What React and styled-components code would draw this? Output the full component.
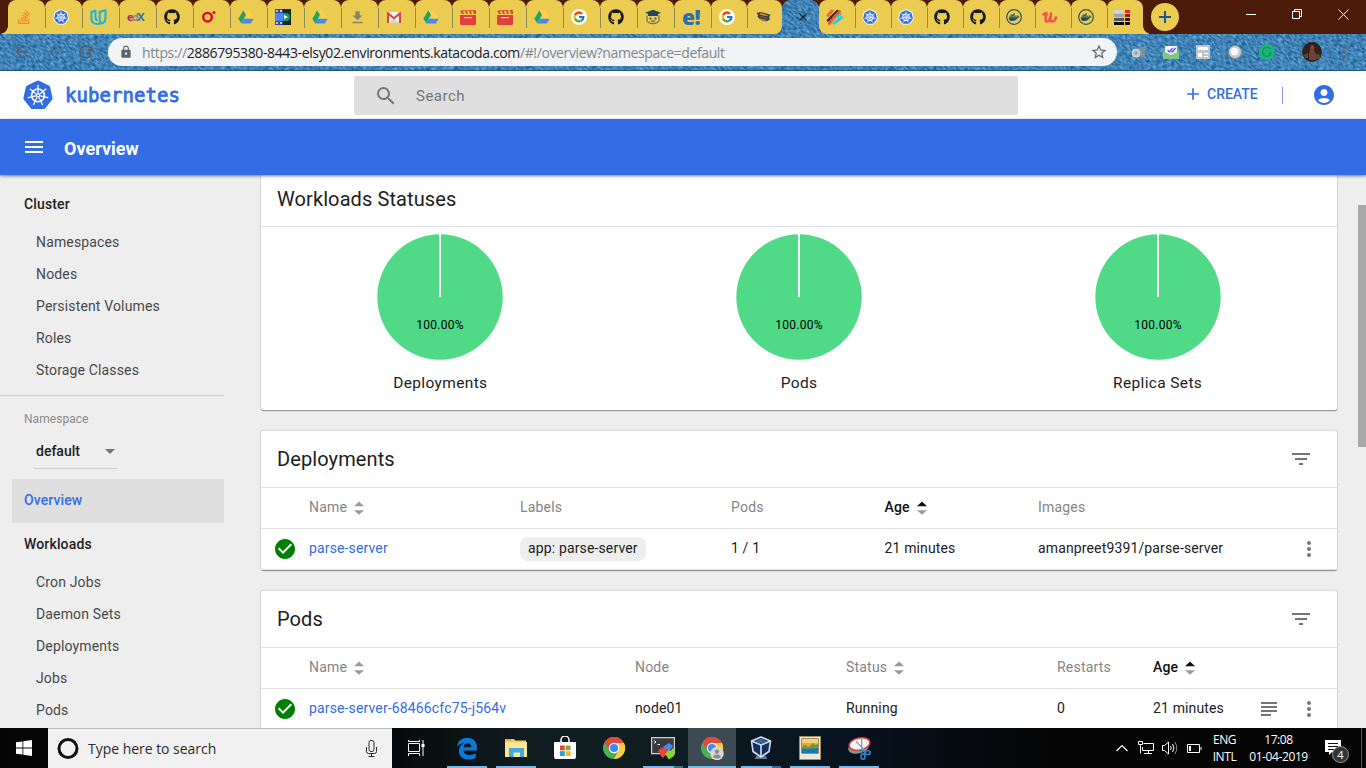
import React from 'react';
import styled, { createGlobalStyle, css } from 'styled-components';
import {
  MdSearch, MdAdd, MdAccountCircle, MdMenu, MdFilterList, MdMoreVert, MdSubject,
  MdCheckCircle, MdArrowDropDown, MdStarBorder, MdLock, MdArrowBack, MdArrowForward,
  MdRefresh, MdClose, MdFileDownload,
} from 'react-icons/md';
import { FaStackOverflow, FaGithub, FaDocker } from 'react-icons/fa';
import { FcGoogle } from 'react-icons/fc';

const BROWN = '#4d1b0a';
const YELLOW = '#eccb51';
const BLUE = '#326de6';

const GlobalStyle = createGlobalStyle`
  * { box-sizing: border-box; }
  html, body { margin: 0; padding: 0; overflow: hidden; }
  body { font-family: Roboto, "Liberation Sans", sans-serif; font-size: 14px; color: #212121; }
  svg { display: block; flex: none; }
`;

const Screen = styled.div`
  width: 1366px;
  height: 768px;
  display: flex;
  flex-direction: column;
  overflow: hidden;
  background: #eee;
`;

/* ---------- browser chrome ---------- */

const Chrome = styled.div`
  position: relative;
  height: 71px;
  flex: none;
  background: #3a80b4;
  border-bottom: 1px solid #23557f;
`;

const DenimLayer = styled.svg`
  position: absolute;
  left: 0;
  top: 0;
`;

const TabStrip = styled.div`
  position: relative;
  display: flex;
  height: 34px;
`;

const Flare = styled.div`
  width: ${(p) => (p.$right ? 6 : 8)}px;
  background: ${(p) =>
    p.$right
      ? `radial-gradient(circle at 8px 0, ${BROWN} 7.5px, ${YELLOW} 8px) 0 100% / 8px 8px no-repeat, ${BROWN}`
      : `radial-gradient(circle at 0 0, ${BROWN} 7.5px, ${YELLOW} 8px) 0 100% / 8px 8px no-repeat, ${BROWN}`};
`;

const TabSlot = styled.div`
  width: ${(p) => p.$w}px;
  background: linear-gradient(${BROWN} 50%, ${(p) => (p.$edge ? 'transparent' : YELLOW)} 50%);
`;

const TabFace = styled.div`
  height: 34px;
  padding: 9px 0 0 ${(p) => p.$pad}px;
  position: relative;
  background: ${YELLOW};
  border-radius: 8px 8px ${(p) => (p.$edge === 'right' ? 8 : 0)}px ${(p) => (p.$edge === 'left' ? 8 : 0)}px;
  ${(p) => p.$line && css`
    &::after {
      content: '';
      position: absolute;
      right: -1px;
      top: 8px;
      width: 1px;
      height: 20px;
      background: #8b8d55;
      z-index: 1;
    }
  `}
`;

const ActiveTab = styled.div`
  width: 37px;
  display: flex;
  justify-content: center;
  padding: 10px 0 0 4px;
  color: #12171b;
  background:
    radial-gradient(circle at 8px 8px, transparent 7.5px, ${BROWN} 8px) 0 0 / 8px 8px no-repeat,
    radial-gradient(circle at 0 8px, transparent 7.5px, ${BROWN} 8px) 100% 0 / 8px 8px no-repeat;
`;

const FrameRest = styled.div`
  flex: 1;
  display: flex;
  background: ${BROWN};
  padding-left: 2px;
`;

const NewTab = styled.div`
  width: 28px;
  height: 28px;
  margin-top: 3px;
  border-radius: 50%;
  background: ${YELLOW};
  color: #17598c;
  display: grid;
  place-items: center;
`;

const WindowControls = styled.div`
  margin-left: auto;
  display: flex;
  height: 28px;
`;

const WindowButton = styled.div`
  width: 46px;
  display: grid;
  place-items: center;
`;

const Toolbar = styled.div`
  position: relative;
  height: 36px;
  display: flex;
  align-items: center;
  color: #56616a;
`;

const NavButtons = styled.div`
  width: 108px;
  display: flex;
  gap: 12px;
  padding-left: 12px;
`;

const Omnibox = styled.div`
  width: 1009px;
  height: 28px;
  border-radius: 14px;
  background: #f1f3f4;
  display: flex;
  align-items: center;
  padding: 0 9px 0 11px;
  color: #5f6368;
`;

const Url = styled.div`
  margin-left: 9px;
  flex: 1;
  font: 14px "Open Sans", "Noto Sans", sans-serif;
  letter-spacing: -0.38px;
  color: #80868b;
  white-space: nowrap;
  b { font-weight: 400; color: #202124; }
`;

const Extensions = styled.div`
  display: flex;
  gap: 16px;
  padding-left: 14px;
`;

const Avatar = styled.div`
  width: 20px;
  height: 20px;
  margin: 0 0 0 27px;
`;

const Kebab = styled.div`
  margin-left: 12px;
  color: #5c656c;
`;

/* ---------- dashboard ---------- */

const TopBar = styled.header`
  height: 48px;
  flex: none;
  display: flex;
  align-items: center;
  background: #fff;
  padding-left: 23px;
`;

const Brand = styled.div`
  width: 331px;
  display: flex;
  align-items: center;
  gap: 12px;
  color: ${BLUE};
  font: 19px "DejaVu Sans Mono", monospace;
  letter-spacing: 0.05px;
  -webkit-text-stroke: 0.8px ${BLUE};
`;

const SearchBox = styled.div`
  width: 664px;
  height: 39px;
  border-radius: 2px;
  background: #dfdfdf;
  display: flex;
  align-items: center;
  gap: 18px;
  padding-left: 20px;
  margin-top: 1px;
  font-size: 15px;
  letter-spacing: 0.5px;
  color: #757575;
`;

const Create = styled.div`
  margin-left: 165px;
  padding-bottom: 2px;
  display: flex;
  align-items: center;
  gap: 4px;
  color: ${BLUE};
  font-weight: 500;
  font-size: 14px;
  letter-spacing: 0;
`;

const VLine = styled.div`
  width: 1px;
  height: 17px;
  margin: 0 29px 0 24px;
  background: #a98be6;
`;

const TitleBar = styled.div`
  position: relative;
  z-index: 2;
  height: 56px;
  flex: none;
  display: flex;
  align-items: center;
  gap: 18px;
  padding: 0 0 0 22px;
  background: ${BLUE};
  color: #fff;
  font-size: 18px;
  font-weight: 700;
  letter-spacing: 0;
  box-shadow: 0 1px 3px rgba(0, 0, 0, 0.5);
  span { padding-top: 3px; }
`;

const Body = styled.div`
  height: 553px;
  flex: none;
  display: flex;
  overflow: hidden;
  background: #eee;
`;

const Sidebar = styled.nav`
  width: 224px;
  flex: none;
  padding-top: 7px;
  letter-spacing: 0.15px;
`;

const NavHeading = styled.div`
  height: 44px;
  line-height: 44px;
  padding-left: 24px;
  font-weight: 500;
  letter-spacing: 0.15px;
`;

const NavItem = styled.div`
  height: 32px;
  line-height: 33px;
  padding-left: 36px;
  color: #484848;
`;

const NavRule = styled.div`
  height: 1px;
  margin-top: 9px;
  background: #d0d0d0;
`;

const NamespaceLabel = styled.div`
  margin: 15px 0 0 24px;
  font-size: 12px;
  line-height: 16px;
  letter-spacing: 0.05px;
  color: #8a8a8a;
`;

const NamespaceSelect = styled.div`
  width: 83px;
  height: 35px;
  margin: 7px 0 10px 34px;
  padding: 0 0 1px 2px;
  border-bottom: 1px solid #cfcfcf;
  display: flex;
  align-items: center;
  justify-content: space-between;
  font-weight: 500;
  letter-spacing: 0;
  svg { margin-right: -5px; color: #757575; }
`;

const NavCurrent = styled(NavHeading)`
  margin: 0 0 -1px 12px;
  padding-left: 12px;
  line-height: 43px;
  background: #dfdfdf;
  color: ${BLUE};
  letter-spacing: 0.1px;
`;

const Main = styled.main`
  width: 1113px;
  flex: none;
  padding-left: 37px;
  display: flex;
  flex-direction: column;
  gap: 21px;
  margin-top: -5px;
`;

const Card = styled.section`
  flex: none;
  background: #fff;
  border-radius: 2px;
  box-shadow: 0 1px 1px rgba(0, 0, 0, 0.38), 0 0 2px rgba(0, 0, 0, 0.25);
`;

const CardTitle = styled.div`
  height: 57px;
  border-bottom: 1px solid #dfdfdf;
  padding: ${(p) => (p.$low ? '1px 24px 0' : '0 24px 1px')} 16px;
  display: flex;
  align-items: center;
  justify-content: space-between;
  font-size: 20px;
  letter-spacing: 0.1px;
  svg { color: #757575; }
`;

const Pies = styled.div`
  height: 183px;
  padding-top: 7px;
  display: grid;
  grid-template-columns: repeat(3, 1fr);
`;

const PieCell = styled.div`
  display: flex;
  flex-direction: column;
  align-items: center;
  font-size: 15.5px;
  letter-spacing: 0.35px;
`;

const PieCaption = styled.div`
  margin-top: 13px;
  line-height: 20px;
`;

const Row = styled.div`
  height: 41px;
  border-bottom: 1px solid #dfdfdf;
  display: grid;
  grid-template-columns: ${(p) => p.$cols};
  align-items: center;
  letter-spacing: 0.14px;
  white-space: nowrap;
  color: ${(p) => (p.$head ? '#858585' : '#212121')};
`;

const StatusCell = styled.div`
  padding-left: 12px;
  color: #008000;
`;

const HeadCell = styled.div`
  display: flex;
  align-items: center;
  gap: 7px;
  letter-spacing: 0.2px;
  font-weight: ${(p) => (p.$active ? 500 : 400)};
  color: ${(p) => (p.$active ? '#111' : 'inherit')};
  span { padding-bottom: 2px; }
`;

const Value = styled.div`
  padding-bottom: 2px;
`;

const Link = styled(Value)`
  color: ${BLUE};
`;

const Chip = styled.span`
  display: inline-block;
  height: 24px;
  line-height: 23px;
  padding: 0 8px;
  border-radius: 8px;
  background: #eee;
`;

const ActionIcon = styled.div`
  color: #757575;
`;

const ScrollTrack = styled.div`
  width: 8px;
  margin-left: auto;
  padding-top: 30px;
`;

const ScrollThumb = styled.div`
  height: 242px;
  background: #a8a8a8;
`;

/* ---------- taskbar ---------- */

const Taskbar = styled.footer`
  height: 40px;
  flex: none;
  display: flex;
  color: #fff;
  background: linear-gradient(90deg, #050505 0, #050708 380px, #101c1f 520px, #0f1c21 680px, #07121f 860px, #060a10 960px, #050505 1050px);
  font-family: "Open Sans", "Noto Sans", sans-serif;
`;

const StartButton = styled.div`
  width: 48px;
  display: grid;
  place-items: center;
`;

const TaskSearch = styled.div`
  width: 344px;
  background: #f1f1f1;
  border-top: 1px solid #bdbdbd;
  color: #2b2b2b;
  display: flex;
  align-items: center;
  padding: 0 14px 0 8px;
  font-size: 14px;
  letter-spacing: -0.03px;
  span { margin-left: 8px; flex: 1; }
`;

const TaskView = styled(StartButton)`
  margin-right: 3px;
`;

const Apps = styled.div`
  display: flex;
  gap: 1px;
`;

const AppButton = styled.div`
  width: 48px;
  height: 40px;
  display: grid;
  place-items: center;
  background:
    ${(p) => (p.$line === 'multi'
      ? 'linear-gradient(90deg, #76b9ed 31px, #3f6d91 31px) 4px 100% / 40px 2px no-repeat,'
      : p.$line === 'full'
        ? 'linear-gradient(#76b9ed, #76b9ed) 0 100% / 48px 2px no-repeat,'
        : p.$line
          ? 'linear-gradient(#76b9ed, #76b9ed) 4px 100% / 40px 2px no-repeat,'
          : '')}
    ${(p) => (p.$line === 'full' ? 'linear-gradient(#3d4a51, #3d4a51)' : 'linear-gradient(transparent, transparent)')};
`;

const Tray = styled.div`
  margin-left: auto;
  display: flex;
  align-items: center;
`;

const TrayIcon = styled.div`
  width: 24px;
  display: grid;
  place-items: center;
`;

const TrayText = styled.div`
  width: ${(p) => p.$w}px;
  text-align: center;
  font-size: 12px;
  line-height: 17px;
  letter-spacing: -0.4px;
  white-space: nowrap;
  padding-left: 1px;
`;

const Notice = styled.div`
  position: relative;
  width: 47px;
  height: 40px;
  padding: 12px 0 0 11px;
`;

const NoticeBadge = styled.div`
  position: absolute;
  left: 18px;
  top: 18px;
  width: 17px;
  height: 17px;
  border-radius: 50%;
  border: 1px solid #9a9a9a;
  background: #333;
  font-size: 11px;
  line-height: 15px;
  text-align: center;
`;

const DesktopEdge = styled.div`
  width: 5px;
  height: 40px;
  border-left: 1px solid #555;
`;

/* ---------- drawings ---------- */

const heptagon = (r) =>
  Array.from({ length: 7 }, (_, i) => {
    const a = (i * 2 * Math.PI) / 7 - Math.PI / 2;
    return `${(16 + r * Math.cos(a)).toFixed(2)},${(16.4 + r * Math.sin(a)).toFixed(2)}`;
  }).join(' ');

const Helm = ({ size = 16, rim }) => (
  <svg width={size} height={size} viewBox="0 0 32 32">
    {rim && <polygon points={heptagon(13.5)} fill="#fff" stroke="#fff" strokeWidth="5" strokeLinejoin="round" />}
    <polygon points={heptagon(rim ? 11.5 : 13.4)} fill={BLUE} stroke={BLUE} strokeWidth="5" strokeLinejoin="round" />
    <g stroke="#fff" fill="none" strokeWidth={rim ? 2 : 1.8} strokeLinecap="round">
      <circle cx="16" cy="16.4" r="6.8" />
      {Array.from({ length: 7 }, (_, i) => (
        <path key={i} d="M16 13.9V5.6" strokeWidth={rim ? 1.6 : 1.3} transform={`rotate(${(i * 360) / 7} 16 16.4)`} />
      ))}
      <circle cx="16" cy="16.4" r="1.6" strokeWidth="1.2" />
    </g>
  </svg>
);

const Drive = () => (
  <svg width="16" height="16" viewBox="0 0 16 16">
    <path d="M5.4 1.2 8 5.8 3.2 14.3.4 9.8z" fill="#1da462" />
    <path d="M5.4 1.2h5.2l5 8.600h-5.200z" fill="#ffcf48" />
    <path d="M5.7 9.8h9.900l-2.700 4.600H3z" fill="#4688f4" />
  </svg>
);

const Udacity = () => (
  <svg width="17" height="16" viewBox="0 0 17 16" fill="none" stroke="#12b5e5" strokeWidth="2" strokeLinejoin="round">
    <path d="M5.500 1.300 1.400 3.200v5.500c0 4.800 3.200 6.300 6 6.300 1.400 0 2.600-.3 3.600-1-1.200-1-1.300-2.500-1.300-4V2.800l5.800-1.500v7.200c0 4-2 6-5 6.200" />
    <path d="M5.500 1.300v7.200c0 1.800.8 2.800 2.300 3" />
  </svg>
);

const Wordmark = styled.div`
  font: ${(p) => (p.$big ? '800 21px' : '700 11px')}/16px "Open Sans", sans-serif;
  letter-spacing: ${(p) => (p.$big ? -0.5 : -1.6)}px;
  color: #2a6fae;
  i { font-style: normal; color: #b5255f; }
  em { font-style: normal; color: #8c8c74; }
`;

const RedRing = () => (
  <svg width="16" height="16" viewBox="0 0 16 16">
    <circle cx="6.5" cy="8.2" r="4.3" fill="none" stroke="#d8072b" strokeWidth="2.400" />
    <circle cx="13" cy="3.500" r="1.500" fill="#d8072b" />
  </svg>
);

const Film = () => (
  <svg width="16" height="16" viewBox="0 0 16 16">
    <path d="M0 0h16v16H0z" fill="#1b2230" />
    <path d="M0 0h8v16H0z" fill="#2447c8" />
    <path d="M0 4h8v8H0z" fill="#4b84fb" />
    <path d="M1 1h2v2H1zM5 1h2v2H5zM1 13h2v2H1zM5 13h2v2H5z" fill="#eccb51" />
    <path d="M8 4h3a4 4 0 0 1 0 8H8z" fill="#12a150" />
    <path d="m9 6 4 2-4 2z" fill="#fff" />
  </svg>
);

const Gmail = () => (
  <svg width="16" height="16" viewBox="0 0 16 16">
    <path d="M1 3h14v11H1z" fill="#f0eeee" />
    <path d="m3 14 5-5 5 5z" fill="#d9d6d2" />
    <path d="M1 14V3h1l6 5 6-5h1v11h-2V6.400L8 10.400 3 6.400V14z" fill="#dc4539" />
  </svg>
);

const Clapper = () => (
  <svg width="16" height="16" viewBox="0 0 16 16" fill="#e0403a">
    <path d="M0 6h16v9a1 1 0 0 1-1 1H1a1 1 0 0 1-1-1z" />
    <path d="M0 1.800 2 5h2L2.500 1h2L6 5h2L6.500 1h2L10 5h2l-1.500-4h2L14 5h2V1.500L14.500 1z" />
    <path d="M4 8h8v1.200H4z" fill="#f7e3d0" />
  </svg>
);

const Scholar = () => (
  <svg width="16" height="16" viewBox="0 0 16 16">
    <path d="M0 3.800 8 .8l8 3-3 1.300v2H3v-2z" fill="#24485e" />
    <path d="M2 6.500v5c1.500 4 10.500 4 12 0v-5" fill="none" stroke="#6d7d58" strokeWidth="1.300" />
    <circle cx="5.500" cy="9.500" r="1" fill="#24485e" />
    <circle cx="10.500" cy="9.500" r="1" fill="#24485e" />
    <path d="M6 12h4" stroke="#24485e" />
  </svg>
);

const Crab = () => (
  <svg width="16" height="16" viewBox="0 0 16 16">
    <g transform="rotate(10 8 8)">
      <path d="m1 5 4-1.500 6 .5 4 .5-1 3 1.500 1.500-3 2.500-4 .5-4-1.500-2-2L3 7.500z" fill="#3a4546" />
      <path d="m4 4.500 5 .3 4 .7-2 1-6-.2zM4 9.500l3 .7 5-.2-2 1.500-4-.4z" fill="#e0862c" />
      <path d="M5 8h7" stroke="#8d5a30" />
    </g>
  </svg>
);

const Stripes = () => (
  <svg width="17" height="16" viewBox="0 0 17 16" strokeWidth="3" strokeLinecap="round">
    <path d="M2 6.500 6 2" stroke="#f0642d" />
    <path d="m2 11.500 9.500-9.500" stroke="#283238" strokeWidth="2.500" />
    <path d="M3.500 14.500 6 11" stroke="#f4572e" />
    <path d="M7.500 9 13.500 2.500" stroke="#f4572e" />
    <path d="m8 14 7.500-5.500" stroke="#1fd0e8" />
    <path d="m11 8 4-3" stroke="#1fd0e8" strokeWidth="2" />
  </svg>
);

const DockerTab = () => (
  <svg width="16" height="16" viewBox="0 0 16 16">
    <circle cx="8" cy="8" r="7.300" fill="none" stroke="#2d5260" strokeWidth="1.200" />
    <svg x="2.300" y="2.700" width="11.500" height="11" viewBox="0 0 16 16">
      <FaDocker color="#1f4a60" size={16} />
    </svg>
  </svg>
);

const Udemy = () => (
  <svg width="16" height="16" viewBox="0 0 16 16" fill="none" stroke="#f2544d" strokeWidth="2.600" strokeLinecap="round" strokeLinejoin="round">
    <path d="M1.500 5.500 4.500 4C4 7 2.500 12.500 5 12.500c2 0 3.500-4 4-8-.5 4-1.500 8 1 8 1.800 0 3.500-2 4-4" />
  </svg>
);

const Swatches = () => (
  <svg width="16" height="16" viewBox="0 0 16 16">
    <path d="M0 1h10v3H0z" fill="#d3d3d3" /><path d="M11 1h5v3h-5z" fill="#ef2430" />
    <path d="M0 5h10v3H0z" fill="#a5a5a5" /><path d="M11 5h5v3h-5z" fill="#942025" />
    <path d="M0 9h10v3H0z" fill="#555" /><path d="M11 9h5v3h-5z" fill="#3a1214" />
    <path d="M0 13h10v3H0zM11 13h5v3h-5z" fill="#0a0a0a" />
  </svg>
);

const SortArrows = ({ active }) => (
  <svg width="10" height="14" viewBox="0 0 10 14">
    <path d="M0 5.200 5 .4l5 4.800z" fill={active ? '#111' : '#9a9a9a'} />
    <path d="M0 9.200h10l-5 4.600z" fill="#9a9a9a" />
  </svg>
);

const Pie = () => (
  <svg width="126" height="126" viewBox="0 0 126 126">
    <circle cx="63" cy="63" r="62.700" fill="#50da88" />
    <path d="M63 0v63" stroke="#fff" strokeWidth="2" />
    <text x="63" y="95" textAnchor="middle" fontSize="12" letterSpacing="0.250" fill="#000" fontFamily="Roboto, sans-serif">100.00%</text>
  </svg>
);

const ChromeLogo = ({ person }) => (
  <svg width="24" height="24" viewBox="0 0 24 24">
    <circle cx="12" cy="12" r="11" fill="#4caf50" />
    <path d="M12 12 2.500 6.500A11 11 0 0 1 21.500 6.500z" fill="#dd4b3e" />
    <path d="M12 7h10a11 11 0 0 1-10 16l4.500-8.500z" fill="#ffcd40" />
    <path d="M2.500 6.500 7.500 14.500l1.500-6L12 7h9.800L21 5.500A11 11 0 0 0 2.500 6.500z" fill="#dd4b3e" />
    <circle cx="12" cy="12" r="5.200" fill="#fff" />
    <circle cx="12" cy="12" r="4.100" fill="#4285f4" />
    {person && (
      <g>
        <circle cx="17" cy="17.500" r="6.800" fill="#d6d6d6" />
        <circle cx="17" cy="15.600" r="2.200" fill="#8b8b8b" />
        <path d="M13 21c.5-3.500 7.500-3.500 8 0a6 6 0 0 1-8 0z" fill="#8b8b8b" />
      </g>
    )}
  </svg>
);

const EdgeLogo = () => (
  <svg width="22" height="23" viewBox="0 0 22 23">
    <path fill="#0a7adc" d="M1 10C1.600 4.500 5.500.8 11.200.8c6 0 9.800 4 9.800 10v2.700H7.500c.2 3 2.700 4.500 6 4.500 2.200 0 4.300-.6 6.200-1.700v4.500c-2 1.200-4.500 1.800-7.200 1.800-6 0-9.600-3.300-9.600-8.500 0-3.800 2-6.700 5.500-8.200C5 6.200 2.500 7.600 1 10zm6.600.2h7.700c0-2.500-1.300-4-3.700-4-2.200 0-3.700 1.500-4 4z" />
  </svg>
);

const Explorer = () => (
  <svg width="24" height="22" viewBox="0 0 24 22">
    <path d="M1 2h9l1.500 1.500H22V20H1z" fill="#f3c94f" />
    <path d="M1 5h22v15H1z" fill="#fde596" />
    <path d="M5 11h15v9h-4v-4.500H9.500V20H5z" fill="#3fa9e0" />
    <path d="M2 2.800h5" stroke="#e5862a" />
  </svg>
);

const Store = () => (
  <svg width="24" height="24" viewBox="0 0 24 24">
    <path d="M8 6V4a4 4 0 0 1 8 0v2" fill="none" stroke="#fff" strokeWidth="1.500" />
    <path d="M1 6h22v15l-1 2H2l-1-2z" fill="#fff" />
    <path d="M7 9.500h4.800v4.800H7z" fill="#e3492b" /><path d="M12.700 9.500h4.800v4.800h-4.800z" fill="#7aad2b" />
    <path d="M7 15.200h4.800V20H7z" fill="#22a0e0" /><path d="M12.700 15.200h4.800V20h-4.800z" fill="#f7b51c" />
  </svg>
);

const Terminal = () => (
  <svg width="24" height="24" viewBox="0 0 24 24">
    <path d="M.600 1.600h22.800v16H.600z" fill="#3a3a3a" stroke="#cfcfcf" strokeWidth="1.200" />
    <path d="m3 4.500 2 1.500-2 1.500M6.500 8.500H9" stroke="#eee" fill="none" />
    <path d="m12 11 6-4 4 3-4 6-3 1z" fill="#3f8bf5" />
    <path d="m7 15 4-3.500 3 2 2-1.500 2 3-6 7-2-2z" fill="#f04432" />
    <path d="m14 18 4-4 1.500 1 2.500-3 2 2-1 6-5 3.500z" fill="#86d531" />
  </svg>
);

const Cube = () => (
  <svg width="22" height="24" viewBox="0 0 22 24">
    <path d="M6 20h10l1 3H5z" fill="#5e7c9c" />
    <path d="M11 1 20.500 5 19 15.500 11 21 3 15.500 1.500 5z" fill="#14305c" stroke="#d5e0ec" strokeWidth="1.600" strokeLinejoin="round" />
    <path d="m1.500 5 9.500 4 9.500-4M11 9v12" fill="none" stroke="#d5e0ec" strokeWidth="1.600" />
    <path d="m5 5 6-2.500L17 5l-6 2.500z" fill="#3c669b" />
  </svg>
);

const Photo = () => (
  <svg width="22" height="24" viewBox="0 0 22 24">
    <path d="M.500.500h21v23H.500z" fill="#f0e9d8" stroke="#a88d5c" />
    <path d="M2.500 2.500h17v15h-17z" fill="#3a2a14" />
    <path d="M3 3h16v9H3z" fill="#f3a52f" />
    <path d="M3 3h16v4H3z" fill="#f8cf72" />
    <path d="m3 11 3-2.500L9 11l2-1 3-3 2 2 3-1v6H3z" fill="#6c9a3b" />
    <path d="M3 12.500 8 13l11-1v5H3z" fill="#1779bd" />
  </svg>
);

const Snip = () => (
  <svg width="24" height="24" viewBox="0 0 24 24">
    <ellipse cx="11.500" cy="11.500" rx="10.500" ry="6" fill="#8a8f94" transform="rotate(-12 11.500 11.500)" />
    <ellipse cx="12.500" cy="8" rx="10.500" ry="6" fill="#f4f4f4" stroke="#d93b37" strokeWidth="1.500" transform="rotate(-12 12.500 8)" />
    <path d="m9 5.500 9 9M14.500 3 15 14" stroke="#8d9aa5" strokeWidth="1.300" />
    <g fill="none" stroke="#2583c9" strokeWidth="1.700">
      <ellipse cx="20.500" cy="16.500" rx="2.700" ry="2" /><ellipse cx="16" cy="20.500" rx="2" ry="2.700" />
      <path d="m12.500 14.500 6 1-2 3" />
    </g>
  </svg>
);

const GoogleDisc = () => (
  <svg width="16" height="16" viewBox="0 0 16 16">
    <circle cx="8" cy="8" r="8" fill="#fff" />
    <svg x="1.500" y="1.500" width="13" height="13" viewBox="0 0 16 16"><FcGoogle size={16} /></svg>
  </svg>
);

/* ---------- data ---------- */

const TABS_LEFT = [
  [37, <FaStackOverflow size={16} color="#ef8b25" />],
  [37, <Helm rim />],
  [37, <Udacity />],
  [37, <Wordmark><i>e</i><em>d</em>X</Wordmark>],
  [37, <FaGithub size={16} color="#171b1f" />],
  [37, <RedRing />],
  [37, <Drive />],
  [37, <Film />],
  [37, <Drive />],
  [37, <MdFileDownload size={17} color="#84836e" />],
  [37, <Gmail />],
  [37, <Drive />],
  [37, <Clapper />],
  [37, <Clapper />],
  [37, <Drive />],
  [37, <GoogleDisc />],
  [37, <FaGithub size={16} color="#171b1f" />],
  [37, <Scholar />],
  [37, <Wordmark $big>e!</Wordmark>],
  [36, <GoogleDisc />],
  [35, <Crab />],
];

const TABS_RIGHT = [
  <Stripes />, <Helm rim />, <Helm rim />,
  <FaGithub size={16} color="#171b1f" />, <FaGithub size={16} color="#171b1f" />,
  <DockerTab />, <Udemy />, <DockerTab />, <Swatches />,
];

const CLUSTER = ['Namespaces', 'Nodes', 'Persistent Volumes', 'Roles', 'Storage Classes'];
const WORKLOADS = ['Cron Jobs', 'Daemon Sets', 'Deployments', 'Jobs', 'Pods'];
const STATUSES = ['Deployments', 'Pods', 'Replica Sets'];

const DEPLOY_COLS = '48px 211px 211px 153.5px 153.5px 1fr 40px';
const POD_COLS = '48px 326px 211px 211px 96px 104px 40px 40px';

const Head = ({ children, sort, active }) => (
  <HeadCell $active={active}>
    <span>{children}</span>
    {sort && <SortArrows active={active} />}
  </HeadCell>
);

const BrowserTop = () => (
  <Chrome>
    <DenimLayer width="1366" height="70">
      <filter id="denim" x="0" y="0" width="100%" height="100%" colorInterpolationFilters="sRGB">
        <feTurbulence type="fractalNoise" baseFrequency="0.24 0.6" numOctaves="2" seed="4" />
        <feColorMatrix values="0.6 0 0 0 -0.05  0.62 0 0 0 0.2  0.5 0 0 0 0.46  0 0 0 0 1" />
      </filter>
      <g transform="rotate(40 683 35)">
        <rect x="-60" y="-480" width="1500" height="1020" filter="url(#denim)" />
      </g>
    </DenimLayer>
    <TabStrip>
      <Flare />
      {TABS_LEFT.map(([w, icon], i) => {
        const last = i === TABS_LEFT.length - 1;
        return (
          <TabSlot key={i} $w={w} $edge={last}>
            <TabFace $pad={8} $line={!last} $edge={last ? 'right' : undefined}>{icon}</TabFace>
          </TabSlot>
        );
      })}
      <ActiveTab><MdClose size={14} /></ActiveTab>
      {TABS_RIGHT.map((icon, i) => (
        <TabSlot key={i} $w={36} $edge={i === 0}>
          <TabFace $pad={7} $line={i < TABS_RIGHT.length - 1} $edge={i === 0 ? 'left' : undefined}>{icon}</TabFace>
        </TabSlot>
      ))}
      <Flare $right />
      <FrameRest>
        <NewTab>
          <svg width="12" height="12" viewBox="0 0 12 12"><path d="M6 0v12M0 6h12" stroke="currentColor" strokeWidth="2" /></svg>
        </NewTab>
        <WindowControls>
          <WindowButton><svg width="10" height="10"><path d="M0 5.500h10" stroke="#fff" /></svg></WindowButton>
          <WindowButton>
            <svg width="10" height="10" fill="none" stroke="#fff"><path d="M.500 2.500h7v7h-7zM2.500 2.500v-2h7v7h-2" /></svg>
          </WindowButton>
          <WindowButton><svg width="11" height="11"><path d="m.500.500 10 10M10.500.500l-10 10" stroke="#fff" /></svg></WindowButton>
        </WindowControls>
      </FrameRest>
    </TabStrip>
    <Toolbar>
      <NavButtons>
        <MdArrowBack size={20} />
        <MdArrowForward size={20} opacity={0.4} />
        <MdRefresh size={20} />
      </NavButtons>
      <Omnibox>
        <MdLock size={14} />
        <Url>https://<b>2886795380-8443-elsy02.environments.katacoda.com</b>/#!/overview?namespace=default</Url>
        <MdStarBorder size={18} />
      </Omnibox>
      <Extensions>
        <svg width="16" height="16"><path d="M7 4 14 2v11H7z" fill="#7d929f" /><circle cx="5" cy="9" r="4.500" fill="#c5d0d8" /><path d="M5 6.500v5M2.500 9h5" stroke="#8293a0" /></svg>
        <svg width="16" height="16"><path d="M0 6 8 1l8 5v9H0z" fill="#5cae62" /><path d="M2 2h12v8l-6 2-6-2z" fill="#f4f6fb" /><path d="m4.500 6 2 2 3-4M8.500 7l1 1 3-4" stroke="#5a55d6" strokeWidth="1.300" fill="none" /><path d="m0 7 8 4 8-4v8H0z" fill="#80c784" /></svg>
        <svg width="16" height="16"><path d="M1 1h14v14H1z" fill="#c2c5c7" /><path d="M3 3h10v3H3zM3 9h4v4H3zM9 9h4v1H9zM9 12h4v1H9z" fill="#fff" /></svg>
        <svg width="16" height="16"><circle cx="8" cy="8" r="6.500" fill="#c9ced2" stroke="#7f8c95" /><circle cx="7.500" cy="7.500" r="3.800" fill="#f7f9fa" /></svg>
        <svg width="16" height="16"><circle cx="8" cy="8" r="8" fill="#1bb576" /><path d="M11.500 5A4.500 4.500 0 1 0 12.300 9H9" stroke="#149061" fill="none" strokeWidth="1.200" /></svg>
      </Extensions>
      <Avatar>
        <svg width="20" height="20"><circle cx="10" cy="10" r="10" fill="#33201c" /><path d="M7 18v-6l1-4 1-5h2l1 5 2 4v6z" fill="#6b4630" /><circle cx="10.500" cy="5.500" r="1.700" fill="#8c4a28" /><path d="M1.500 13 6 11v5H3.500zM14 12l5 1-2.500 4H14z" fill="#5a4a2c" /></svg>
      </Avatar>
      <Kebab><MdMoreVert size={20} /></Kebab>
    </Toolbar>
  </Chrome>
);

const Windows = () => (
  <svg width="16" height="16" viewBox="0 0 16 16" fill="#fff">
    <path d="M0 2.300 6.500 1.400v6.200H0zM7.300 1.300 16 0v7.600H7.300zM0 8.400h6.500v6.200L0 13.700zM7.300 8.400H16V16l-8.700-1.300z" />
  </svg>
);

const WindowsBar = () => (
  <Taskbar>
    <StartButton><Windows /></StartButton>
    <TaskSearch>
      <svg width="24" height="24"><circle cx="12" cy="11.500" r="9" fill="none" stroke="#111" strokeWidth="3" /></svg>
      <span>Type here to search</span>
      <svg width="13" height="17" fill="none" stroke="#2b2b2b"><rect x="4" y=".5" width="5" height="11" rx="2" /><path d="M1.500 7v4.500q0 2 2 2h6q2 0 2-2V7M6.500 13.500v3M3.500 16.500h6" /></svg>
    </TaskSearch>
    <TaskView>
      <svg width="17" height="16" fill="none" stroke="#fff"><path d="M.500 3.500h11v8H.500zM.500 0v1.500h11V0M.500 16v-2.500h11V16M15 0v16" /><path d="M13.500 4h3v3h-3z" fill="#fff" stroke="none" /></svg>
    </TaskView>
    <Apps>
      <AppButton $line="one"><EdgeLogo /></AppButton>
      <AppButton $line="one"><Explorer /></AppButton>
      <AppButton><Store /></AppButton>
      <AppButton><ChromeLogo /></AppButton>
      <AppButton $line="multi"><Terminal /></AppButton>
      <AppButton $line="full"><ChromeLogo person /></AppButton>
      <AppButton $line="multi"><Cube /></AppButton>
      <AppButton $line="one"><Photo /></AppButton>
      <AppButton $line="one"><Snip /></AppButton>
    </Apps>
    <Tray>
      <TrayIcon><svg width="12" height="8"><path d="m.500 7 5.500-5.500L11.500 7" fill="none" stroke="#fff" strokeWidth="1.200" /></svg></TrayIcon>
      <TrayIcon><svg width="17" height="14" fill="none" stroke="#fff"><path d="M5.500 2.500h10v7h-11V6M10.500 9.500v3M6 12.500h8M.500.500h4v3h-4zM2.500 3.500v9" /></svg></TrayIcon>
      <TrayIcon><svg width="16" height="14" fill="none" stroke="#fff"><path d="M.500 4.500h2l4-3.500v12l-4-3.500h-2zM8.500 5q1.500 2 0 4M10.500 3q3 4 0 8" /><path d="M12.800 1q4 6 0 12" stroke="#888" /></svg></TrayIcon>
      <TrayIcon><svg width="15" height="9" fill="none" stroke="#fff"><path d="M.500.500h12v8H.500zM14 3v3" /><path d="M2 2h2v5H2z" fill="#fff" stroke="none" /></svg></TrayIcon>
      <TrayText $w={36}>ENG<br />INTL</TrayText>
      <TrayText $w={72}>17:08<br />01-04-2019</TrayText>
      <Notice>
        <svg width="16" height="16"><path d="M0 0h16v12h-9l-3 3v-3H0z" fill="#fff" /><path d="M3 3.500h10M3 6.500h10M3 9.500h6" stroke="#111" /></svg>
        <NoticeBadge>4</NoticeBadge>
      </Notice>
      <DesktopEdge />
    </Tray>
  </Taskbar>
);

export default function App() {
  return (
    <Screen>
      <GlobalStyle />
      <BrowserTop />
      <TopBar>
        <Brand><Helm size={30} /><span>kubernetes</span></Brand>
        <SearchBox><MdSearch size={24} />Search</SearchBox>
        <Create><MdAdd size={20} />CREATE</Create>
        <VLine />
        <MdAccountCircle size={24} color={BLUE} />
      </TopBar>
      <TitleBar><MdMenu size={24} /><span>Overview</span></TitleBar>
      <Body>
        <Sidebar>
          <NavHeading>Cluster</NavHeading>
          {CLUSTER.map((n) => <NavItem key={n}>{n}</NavItem>)}
          <NavRule />
          <NamespaceLabel>Namespace</NamespaceLabel>
          <NamespaceSelect>default<MdArrowDropDown size={24} /></NamespaceSelect>
          <NavCurrent>Overview</NavCurrent>
          <NavHeading>Workloads</NavHeading>
          {WORKLOADS.map((n) => <NavItem key={n}>{n}</NavItem>)}
        </Sidebar>
        <Main>
          <Card>
            <CardTitle $low>Workloads Statuses</CardTitle>
            <Pies>
              {STATUSES.map((n) => (
                <PieCell key={n}><Pie /><PieCaption>{n}</PieCaption></PieCell>
              ))}
            </Pies>
          </Card>
          <Card>
            <CardTitle>Deployments<MdFilterList size={24} /></CardTitle>
            <Row $cols={DEPLOY_COLS} $head>
              <span />
              <Head sort>Name</Head>
              <Head>Labels</Head>
              <Head>Pods</Head>
              <Head sort active>Age</Head>
              <Head>Images</Head>
              <span />
            </Row>
            <Row $cols={DEPLOY_COLS}>
              <StatusCell><MdCheckCircle size={24} /></StatusCell>
              <Link>parse-server</Link>
              <div><Chip>app: parse-server</Chip></div>
              <Value>1 / 1</Value>
              <Value>21 minutes</Value>
              <Value>amanpreet9391/parse-server</Value>
              <ActionIcon><MdMoreVert size={24} /></ActionIcon>
            </Row>
          </Card>
          <Card>
            <CardTitle>Pods<MdFilterList size={24} /></CardTitle>
            <Row $cols={POD_COLS} $head>
              <span />
              <Head sort>Name</Head>
              <Head>Node</Head>
              <Head sort>Status</Head>
              <Head>Restarts</Head>
              <Head sort active>Age</Head>
              <span />
              <span />
            </Row>
            <Row $cols={POD_COLS}>
              <StatusCell><MdCheckCircle size={24} /></StatusCell>
              <Link>parse-server-68466cfc75-j564v</Link>
              <Value>node01</Value>
              <Value>Running</Value>
              <Value>0</Value>
              <Value>21 minutes</Value>
              <ActionIcon><MdSubject size={24} /></ActionIcon>
              <ActionIcon><MdMoreVert size={24} /></ActionIcon>
            </Row>
          </Card>
        </Main>
        <ScrollTrack><ScrollThumb /></ScrollTrack>
      </Body>
      <WindowsBar />
    </Screen>
  );
}
